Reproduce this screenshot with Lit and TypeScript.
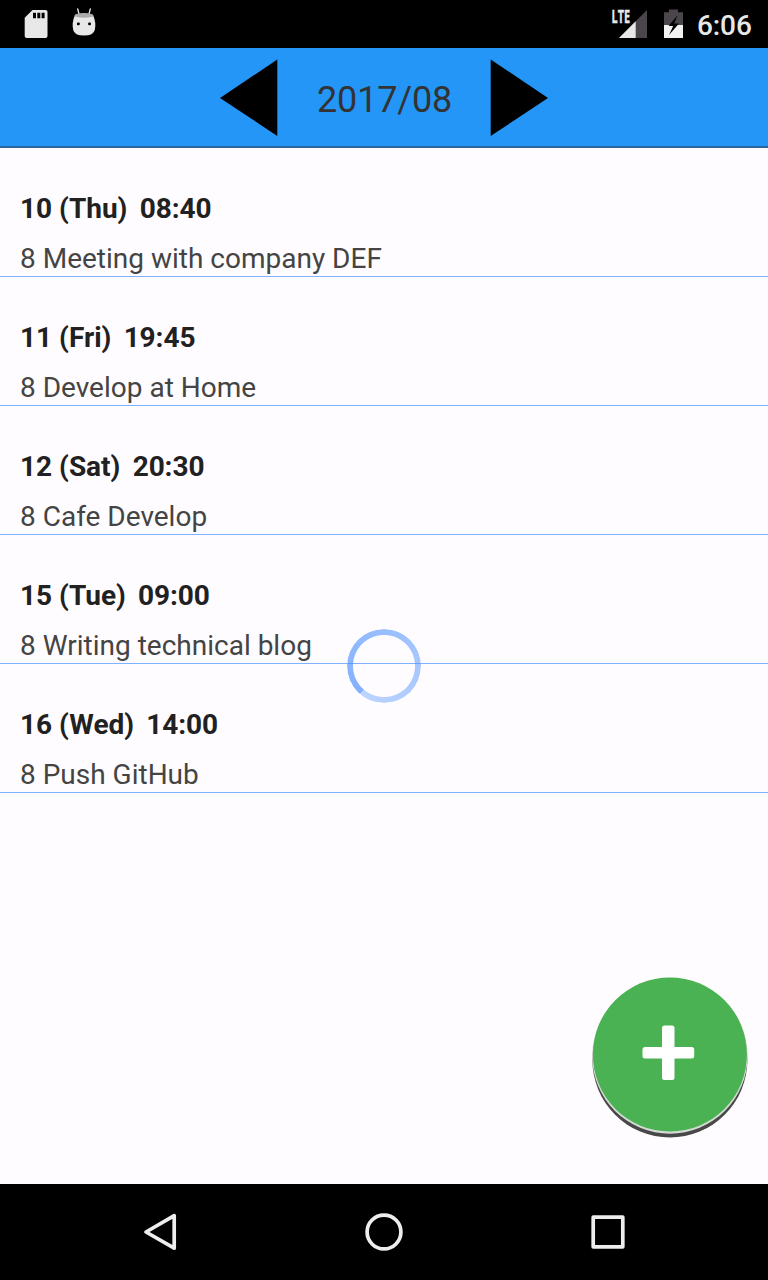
import { LitElement, html, css, svg } from "lit";
import { customElement, property, state } from "lit/decorators.js";

interface Entry {
  when: string;
  time: string;
  text: string;
}

@customElement("status-bar")
class StatusBar extends LitElement {
  static styles = css`
    :host {
      display: flex;
      justify-content: space-between;
      height: 48px;
      background: #000;
      flex: none;
    }
    svg {
      display: block;
    }
    .right {
      display: flex;
    }
    .clock {
      font-size: 28px;
      font-weight: 500;
      line-height: 52px;
      color: #e8e8e8;
      width: 71px;
      white-space: nowrap;
      letter-spacing: -0.1px;
    }
    .lte {
      font: 700 17.3px "Open Sans", sans-serif;
      fill: #e8e8e8;
      stroke: #e8e8e8;
      stroke-width: 0.3;
    }
  `;

  render() {
    return html`
      <svg width="110" height="48">
        <path
          d="M32.5 10H45.5Q47.5 10 47.5 12V36Q47.5 38 45.5 38H26.700Q24.700 38 24.700 36V17.800Z"
          fill="#e8e8e8"
        />
        <path d="M33 12.800h3v5.500h-3zM37.300 12.800h3v5.500h-3zM41.600 12.800h3v5.500h-3z" fill="#000" />
        <path d="M77.700 9L79 14M90.300 9L89 14" stroke="#e8e8e8" stroke-width="1.300" stroke-linecap="round" />
        <path
          d="M75 15Q84 12 93 15Q96.500 23 94.800 30Q93.500 35.500 84 35.500Q74.500 35.500 73.200 30Q71.500 23 75 15Z"
          fill="#e8e8e8"
        />
        <ellipse cx="84" cy="15.400" rx="9.500" ry="2.400" fill="#aaa" />
        <rect x="77" y="22.500" width="2.700" height="2.700" rx=".8" fill="#000" />
        <rect x="88.200" y="22.500" width="2.700" height="2.700" rx=".8" fill="#000" />
      </svg>
      <div class="right">
        <svg width="97" height="48" viewBox="600 0 97 48">
          <path d="M647 10V38H619Z" fill="#4b464b" />
          <path d="M635.700 21.300V38H619Z" fill="#e8e8e8" />
          <path d="M610 8H631V23L628 25H610Z" fill="#000" />
          <text class="lte" x="611.500" y="22.500" textLength="18.500" lengthAdjust="spacingAndGlyphs">LTE</text>
          <path d="M669 9.500H678V12.200H683V25H664V12.200H669Z" fill="#4b464b" />
          <path d="M664 25H683V38H664Z" fill="#f2f2f2" />
          <path d="M677.500 15.500L668.500 26H673.200L669 35L679 23.500H674.200Z" fill="#000" />
        </svg>
        <div class="clock">6:06</div>
      </div>
    `;
  }
}

@customElement("month-header")
class MonthHeader extends LitElement {
  @property() month = "";

  static styles = css`
    :host {
      display: flex;
      align-items: center;
      justify-content: center;
      gap: 39px;
      height: 100px;
      box-sizing: border-box;
      background: #2396f7;
      border-bottom: 2px solid #2d669c;
      flex: none;
    }
    svg {
      display: block;
    }
    .month {
      font-size: 36px;
      line-height: 42px;
      padding-top: 6px;
      color: #333;
      width: 134px;
      white-space: nowrap;
      letter-spacing: -0.15px;
    }
  `;

  render() {
    return html`
      <svg width="58" height="78"><path d="M0 40L57.300 1.500V78Z" /></svg>
      <div class="month">${this.month}</div>
      <svg width="58" height="78"><path d="M58 40L.7 1.500V78Z" /></svg>
    `;
  }
}

@customElement("schedule-row")
class ScheduleRow extends LitElement {
  @property({ attribute: false }) entry!: Entry;

  static styles = css`
    :host {
      display: flex;
      flex-direction: column;
      gap: 17px;
      padding: 44px 20px 1px;
      border-bottom: 1px solid #80b2ff;
      font-size: 28px;
      line-height: 33px;
      white-space: pre;
    }
    .when {
      font-weight: 700;
      color: #212121;
    }
    .time {
      margin-left: -1.700px;
      letter-spacing: -0.080px;
    }
    .text {
      color: #444;
    }
  `;

  render() {
    const { when, time, text } = this.entry;
    return html`<div class="when">${when + "  "}<span class="time">${time}</span></div><div class="text">${text}</div>`;
  }
}

@customElement("nav-bar")
class NavBar extends LitElement {
  static styles = css`
    :host {
      display: flex;
      justify-content: center;
      gap: 176px;
      align-items: center;
      height: 96px;
      background: #000;
      flex: none;
    }
    svg {
      display: block;
      fill: none;
      stroke: #efedef;
      stroke-width: 3.700;
      stroke-linejoin: round;
    }
  `;

  render() {
    const shapes = [
      svg`<path d="M10 24L38.200 7.700V40.200Z" />`,
      svg`<circle cx="24" cy="24" r="16.900" />`,
      svg`<rect x="9.200" y="9.200" width="29.600" height="29.600" />`,
    ];
    return shapes.map((s) => html`<svg width="48" height="48">${s}</svg>`);
  }
}

@customElement("app-root")
class AppRoot extends LitElement {
  @state() private entries: Entry[] = [
    { when: "10 (Thu)", time: "08:40", text: "8 Meeting with company DEF" },
    { when: "11 (Fri)", time: "19:45", text: "8 Develop at Home" },
    { when: "12 (Sat)", time: "20:30", text: "8 Cafe Develop" },
    { when: "15 (Tue)", time: "09:00", text: "8 Writing technical blog" },
    { when: "16 (Wed)", time: "14:00", text: "8 Push GitHub" },
  ];

  static styles = css`
    :host {
      display: flex;
      flex-direction: column;
      width: 768px;
      height: 1280px;
      font-family: Roboto, sans-serif;
      background: #fffcff;
    }
    .content {
      position: relative;
      flex: 1;
      min-height: 0;
    }
    .spinner {
      position: absolute;
      left: 347px;
      top: 480.500px;
      width: 74px;
      height: 74px;
      border-radius: 50%;
      background: conic-gradient(from 221deg, rgba(77, 144, 255, 0.7), rgba(77, 144, 255, 0.37));
      -webkit-mask: radial-gradient(circle, transparent 30.500px, #000 31.500px);
      mask: radial-gradient(circle, transparent 30.500px, #000 31.500px);
    }
    .add {
      position: absolute;
      right: 18px;
      bottom: 44px;
      width: 160px;
      height: 166px;
      padding: 0;
      border: 0;
      background: none;
    }
    .add svg {
      display: block;
    }
  `;

  render() {
    return html`
      <status-bar></status-bar>
      <month-header month="2017/08"></month-header>
      <div class="content">
        ${this.entries.map((e) => html`<schedule-row .entry=${e}></schedule-row>`)}
        <div class="spinner"></div>
        <button class="add" aria-label="Add">
          <svg width="160" height="166" viewBox="590 974 160 166">
            <circle cx="669.900" cy="1060" r="77.500" fill="#484848" />
            <circle cx="669.900" cy="1056" r="77.700" fill="#d4dad4" />
            <circle cx="669.900" cy="1054.500" r="77" fill="#4bb253" />
            <rect x="662" y="1025.500" width="12.500" height="54.500" rx="2.500" fill="#fff" />
            <rect x="642.500" y="1047" width="51.700" height="11.500" rx="2.500" fill="#fff" />
          </svg>
        </button>
      </div>
      <nav-bar></nav-bar>
    `;
  }
}
